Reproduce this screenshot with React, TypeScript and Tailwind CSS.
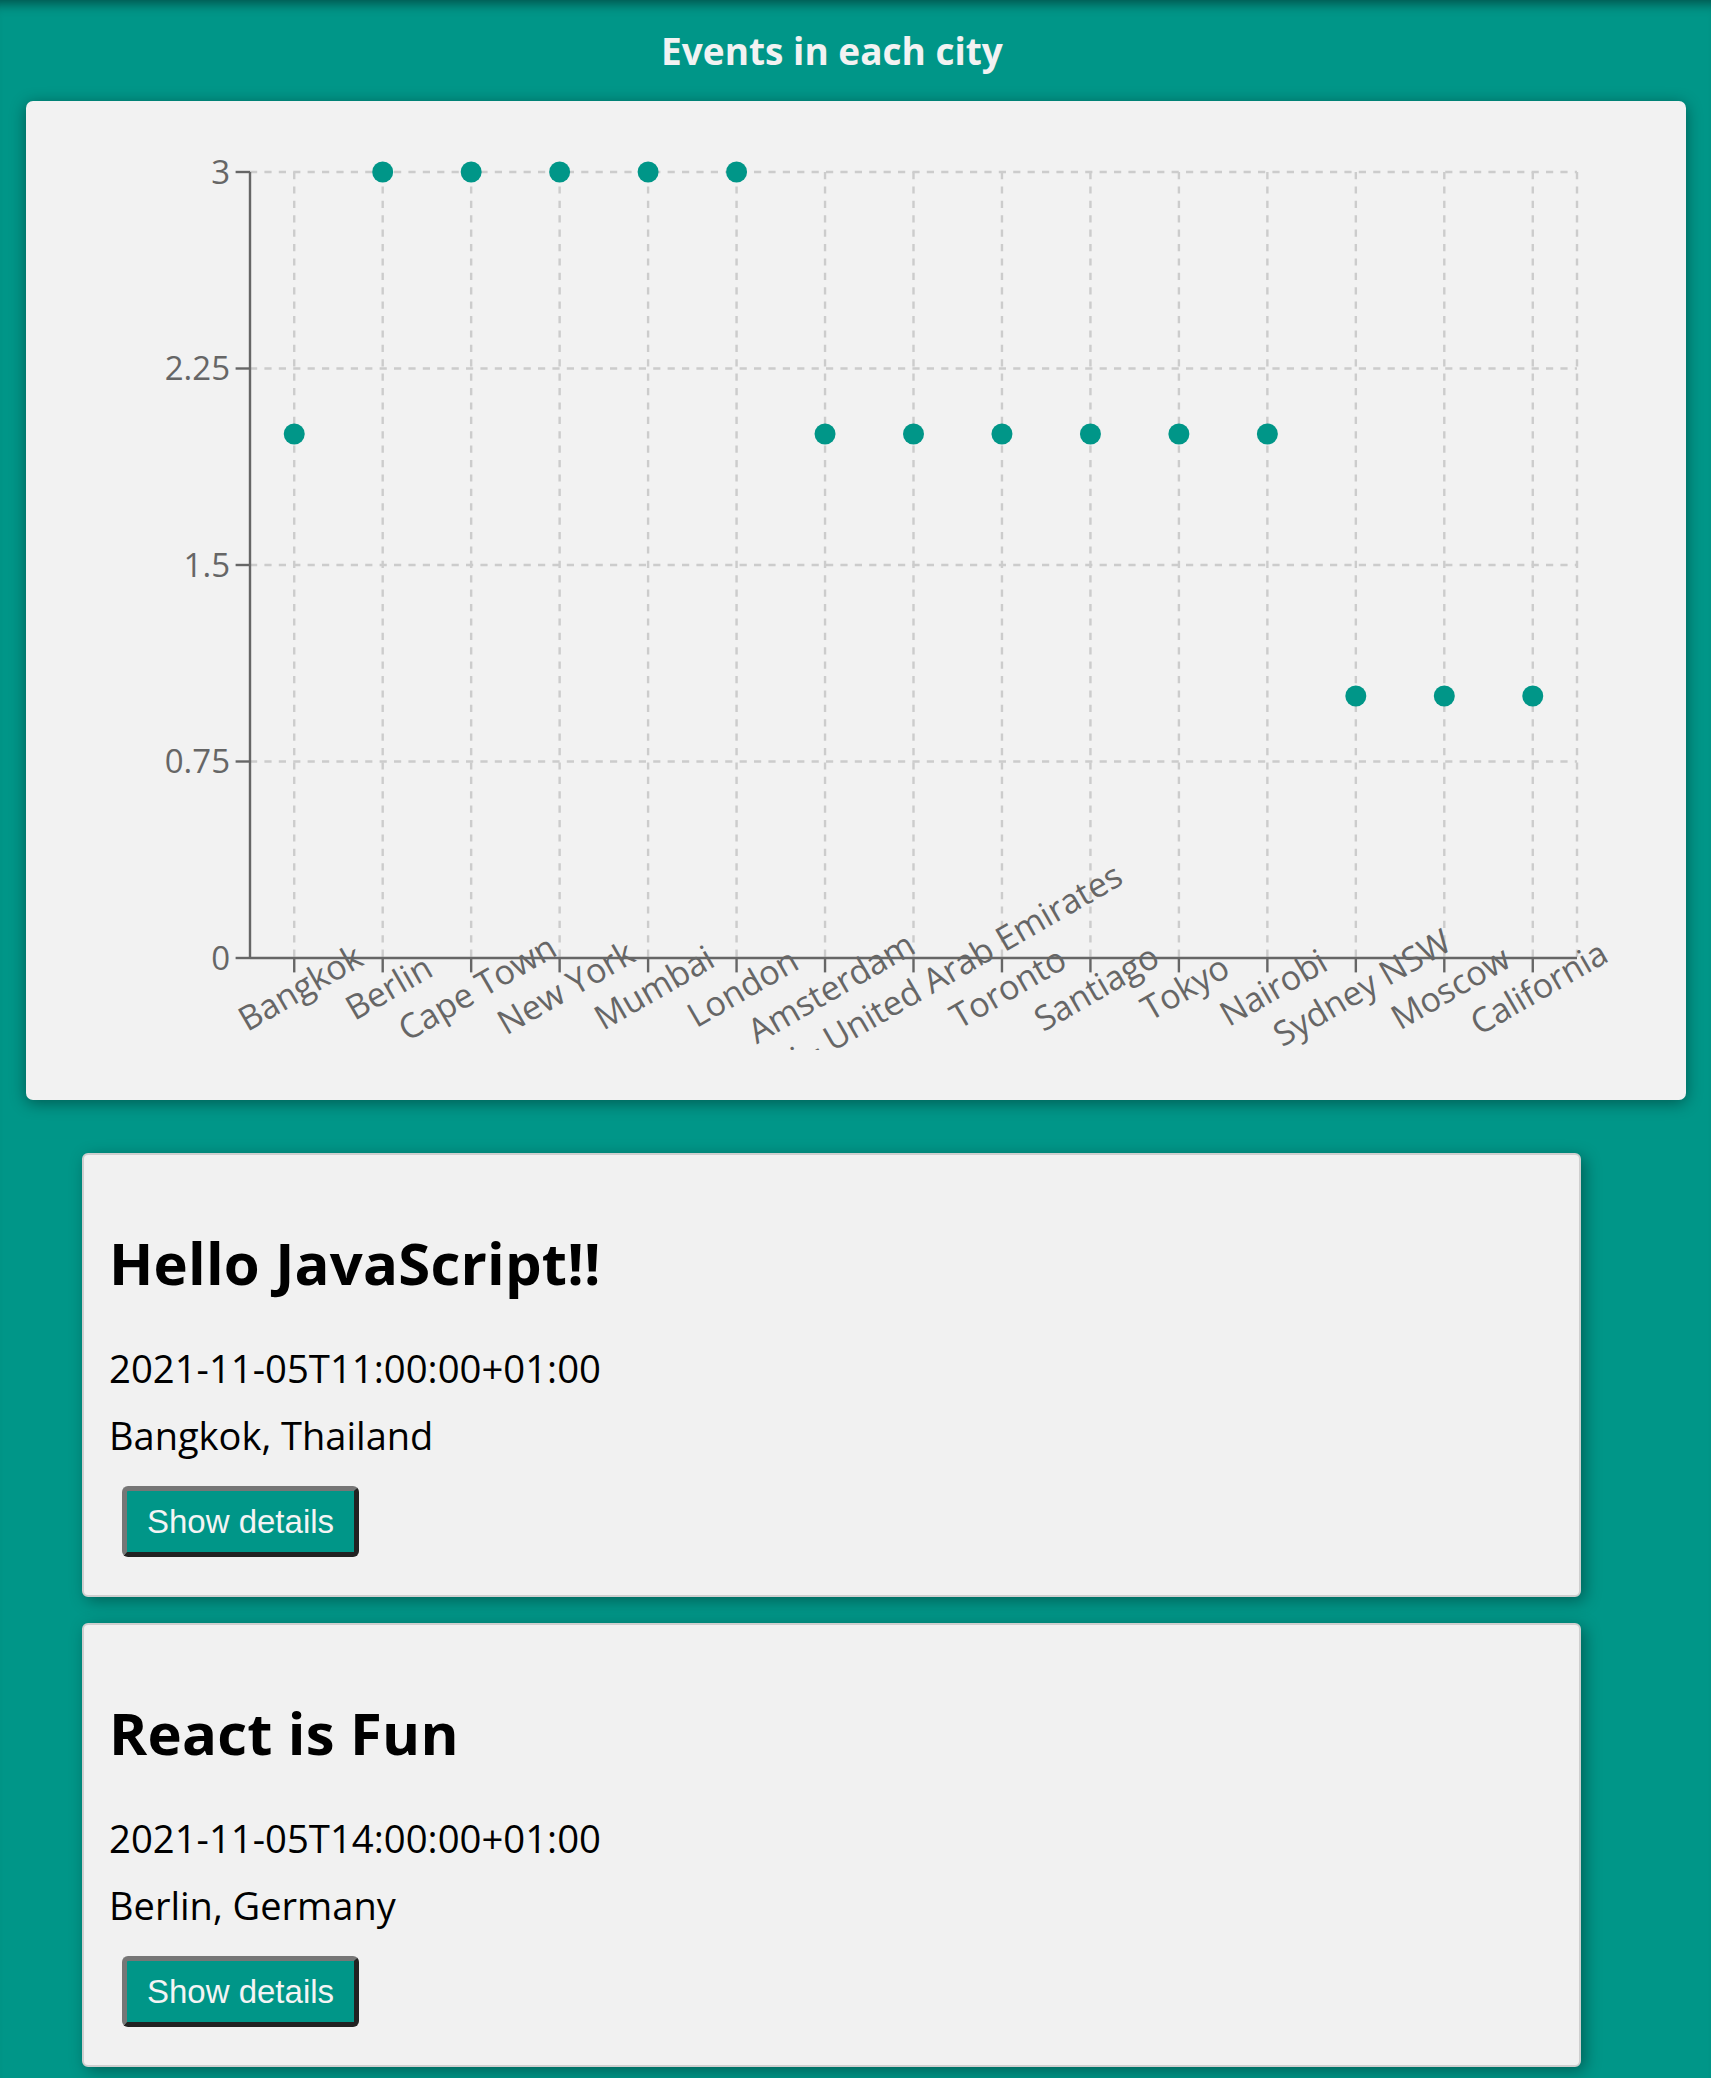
import React from "react";

const TEAL = "#009688";

const cities: { name: string; count: number }[] = [
  { name: "Bangkok", count: 2 },
  { name: "Berlin", count: 3 },
  { name: "Cape Town", count: 3 },
  { name: "New York", count: 3 },
  { name: "Mumbai", count: 3 },
  { name: "London", count: 3 },
  { name: "Amsterdam", count: 2 },
  { name: "Dubai - United Arab Emirates", count: 2 },
  { name: "Toronto", count: 2 },
  { name: "Santiago", count: 2 },
  { name: "Tokyo", count: 2 },
  { name: "Nairobi", count: 2 },
  { name: "Sydney NSW", count: 1 },
  { name: "Moscow", count: 1 },
  { name: "California", count: 1 },
];

const X0 = 224;
const X1 = 1551;
const YT = 71;
const YB = 857;
const BAND = (X1 - X0) / cities.length;
const tx = (i: number) => X0 + BAND / 2 + i * BAND;
const ty = (v: number) => YB - v * ((YB - YT) / 3);

function Chart() {
  const yTicks = [0, 0.75, 1.5, 2.25, 3];
  const labelY = YB + 14.4 + 4.8;
  return (
    <svg
      width={1660}
      height={949}
      viewBox="0 0 1660 949"
      className="block overflow-hidden"
      style={{ fontFamily: "'Open Sans', sans-serif" }}
    >
      <g stroke="#cccccc" strokeWidth={2.4} strokeDasharray="7.2 7.2" fill="none">
        {yTicks
          .filter((v) => v > 0)
          .map((v) => (
            <line key={`h${v}`} x1={X0} x2={X1} y1={ty(v)} y2={ty(v)} />
          ))}
        {cities.map((_, i) => (
          <line key={`v${i}`} x1={tx(i)} x2={tx(i)} y1={YT} y2={YB} />
        ))}
        <line x1={X1} x2={X1} y1={YT} y2={YB} />
      </g>
      <g stroke="#666666" strokeWidth={2.4}>
        <line x1={X0} x2={X0} y1={YT} y2={YB} />
        {yTicks.map((v) => (
          <line key={`yt${v}`} x1={X0 - 14.4} x2={X0} y1={ty(v)} y2={ty(v)} />
        ))}
        <line x1={X0} x2={X1} y1={YB} y2={YB} />
        {cities.map((_, i) => (
          <line key={`xt${i}`} x1={tx(i)} x2={tx(i)} y1={YB} y2={YB + 14.4} />
        ))}
      </g>
      <g fill="#666666" fontSize={33}>
        {yTicks.map((v) => (
          <text key={`yl${v}`} x={X0 - 20} y={ty(v)} dy="0.355em" textAnchor="end">
            {v}
          </text>
        ))}
      </g>
      <g fill="#666666" fontSize={34}>
        {cities.map((c, i) => (
          <text
            key={`xl${i}`}
            x={tx(i)}
            y={labelY}
            dy="0.71em"
            textAnchor="middle"
            transform={`rotate(-30, ${tx(i)}, ${labelY})`}
          >
            {c.name}
          </text>
        ))}
      </g>
      <g fill={TEAL}>
        {cities.map((c, i) => (
          <circle key={`d${i}`} cx={tx(i)} cy={ty(c.count)} r={10.5} />
        ))}
      </g>
    </svg>
  );
}

function EventCard({ title, date, location }: { title: string; date: string; location: string }) {
  return (
    <div className="w-[1499px] h-[444px] bg-[#f1f1f1] border-2 border-[#cfcfcf] rounded-[6px] shadow-[4px_4px_16px_rgba(0,0,0,0.35)] pl-[25px] pt-[79px] box-border">
      <h1 className="m-0 text-[58px] leading-[58px] font-bold text-black tracking-[0.2px]">{title}</h1>
      <p className="mt-[53px] text-[38.3px] leading-[46px] text-black">{date}</p>
      <p className="mt-[21px] text-[38px] leading-[46px] text-black">{location}</p>
      <button
        type="button"
        className="mt-[28px] ml-[13px] w-[237px] h-[71px] flex items-center justify-center rounded-[6px] bg-[#009688] text-[#f4f4f4] text-[33px] font-['Liberation_Sans',Arial,sans-serif] border-[5px] border-t-[#767676] border-l-[#767676] border-r-[#222222] border-b-[#222222]"
      >
        Show details
      </button>
    </div>
  );
}

export default function App() {
  return (
    <div className="min-h-[2078px] w-full bg-[#009688] font-['Open_Sans',sans-serif] shadow-[inset_0_14px_12px_-10px_rgba(0,0,0,0.45)] overflow-hidden">
      <h2 className="w-[1664px] pt-[25px] mb-[24px] text-center text-[37px] leading-[52px] font-bold text-[#f2f2f2]">
        Events in each city
      </h2>
      <div className="ml-[26px] w-[1660px] h-[999px] bg-[#f2f2f2] rounded-[7px] shadow-[0_3px_16px_rgba(0,0,0,0.4)]">
        <Chart />
      </div>
      <div className="ml-[82px] mt-[53px] flex flex-col gap-[26px]">
        <EventCard title="Hello JavaScript!!" date="2021-11-05T11:00:00+01:00" location="Bangkok, Thailand" />
        <EventCard title="React is Fun" date="2021-11-05T14:00:00+01:00" location="Berlin, Germany" />
      </div>
    </div>
  );
}
